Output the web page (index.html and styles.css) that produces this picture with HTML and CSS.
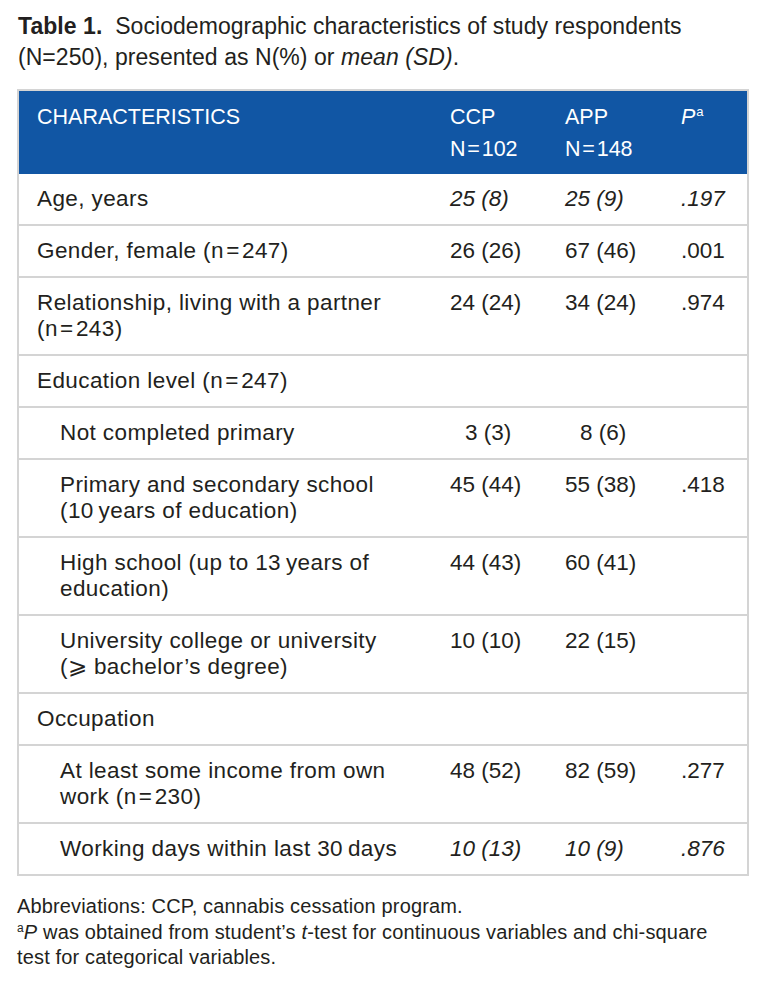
FILE: index.html
```html
<!DOCTYPE html>
<html lang="en">
<head>
  <meta charset="UTF-8" />
  <meta name="viewport" content="width=device-width, initial-scale=1" />
  <title>Table 1. Sociodemographic characteristics</title>
  <link rel="stylesheet" href="styles.css">
</head>
<body>

  <p class="caption"><b>Table 1.</b>&nbsp; Sociodemographic characteristics of study respondents<br>(N=250), presented as N(%) or <i>mean (SD)</i>.</p>

  <table class="data">
    <colgroup>
      <col class="c-label" />
      <col class="c-ccp" />
      <col class="c-app" />
      <col class="c-p" />
    </colgroup>
    <thead>
      <tr>
        <th>CHARACTERISTICS</th>
        <th>CCP<br>N&#8202;=&#8202;102</th>
        <th>APP<br>N&#8202;=&#8202;148</th>
        <th><i>P</i><sup>a</sup></th>
      </tr>
    </thead>
    <tbody>
      <tr>
        <td>Age, years</td>
        <td><i>25 (8)</i></td>
        <td><i>25 (9)</i></td>
        <td><i>.197</i></td>
      </tr>
      <tr>
        <td>Gender, female (n&#8202;=&#8202;247)</td>
        <td>26 (26)</td>
        <td>67 (46)</td>
        <td>.001</td>
      </tr>
      <tr>
        <td>Relationship, living with a partner<br>(n&#8202;=&#8202;243)</td>
        <td>24 (24)</td>
        <td>34 (24)</td>
        <td>.974</td>
      </tr>
      <tr>
        <td>Education level (n&#8202;=&#8202;247)</td>
        <td></td>
        <td></td>
        <td></td>
      </tr>
      <tr>
        <td class="sub">Not completed primary</td>
        <td><span class="pad">3 (3)</span></td>
        <td><span class="pad">8 (6)</span></td>
        <td></td>
      </tr>
      <tr>
        <td class="sub">Primary and secondary school<br>(10&#8201;years of education)</td>
        <td>45 (44)</td>
        <td>55 (38)</td>
        <td>.418</td>
      </tr>
      <tr>
        <td class="sub">High school (up to 13&#8201;years of<br>education)</td>
        <td>44 (43)</td>
        <td>60 (41)</td>
        <td></td>
      </tr>
      <tr>
        <td class="sub">University college or university<br>(&#10878; bachelor’s degree)</td>
        <td>10 (10)</td>
        <td>22 (15)</td>
        <td></td>
      </tr>
      <tr>
        <td>Occupation</td>
        <td></td>
        <td></td>
        <td></td>
      </tr>
      <tr>
        <td class="sub">At least some income from own<br>work (n&#8202;=&#8202;230)</td>
        <td>48 (52)</td>
        <td>82 (59)</td>
        <td>.277</td>
      </tr>
      <tr>
        <td class="sub">Working days within last 30&#8201;days</td>
        <td><i>10 (13)</i></td>
        <td><i>10 (9)</i></td>
        <td><i>.876</i></td>
      </tr>
    </tbody>
  </table>

  <div class="notes">
    <p>Abbreviations: CCP, cannabis cessation program.</p>
    <p><sup>a</sup><i>P</i> was obtained from student’s <i>t</i>-test for continuous variables and chi-square<br>test for categorical variables.</p>
  </div>

</body>
</html>
```

FILE: styles.css
```css
body {
  margin: 0;
  padding: 11px 17px 0 17px;
  font-family: "Liberation Sans", Arial, sans-serif;
  color: #231f20;
  background: #fff;
}

.caption {
  margin: 0 0 16px 1px;
  font-size: 23px;
  line-height: 31px;
  letter-spacing: 0.05px;
  white-space: nowrap;
}

.data {
  width: 730px;
  border-collapse: collapse;
  table-layout: fixed;
  font-size: 22.5px;
  border: 2px solid #d4d4d4;
}

.c-label { width: 414px; }
.c-ccp { width: 115px; }
.c-app { width: 116px; }
.c-p { width: 85px; }

.data thead th {
  background: #1156a4;
  color: #fff;
  font-weight: normal;
  text-align: left;
  vertical-align: top;
  padding: 10px 0 9px 18px;
  line-height: 32px;
  font-size: 21.5px;
}

.data th sup {
  font-size: 13px;
  vertical-align: 8px;
  line-height: 0;
  margin-left: 1px;
}

.data td {
  padding: 12px 0 12px 18px;
  line-height: 26px;
  vertical-align: top;
  border-top: 2px solid #d4d4d4;
  white-space: nowrap;
}

.data td:first-child {
  letter-spacing: 0.4px;
}

.data tbody tr:first-child td {
  border-top: none;
}

.data td.sub {
  padding-left: 41px;
}

.pad {
  padding-left: 15px;
}

.notes {
  margin-top: 18px;
  font-size: 20px;
  line-height: 25.5px;
  letter-spacing: 0.15px;
  white-space: nowrap;
}

.notes p {
  margin: 0;
}

.notes sup {
  font-size: 12px;
  vertical-align: 7px;
  line-height: 0;
}
```
